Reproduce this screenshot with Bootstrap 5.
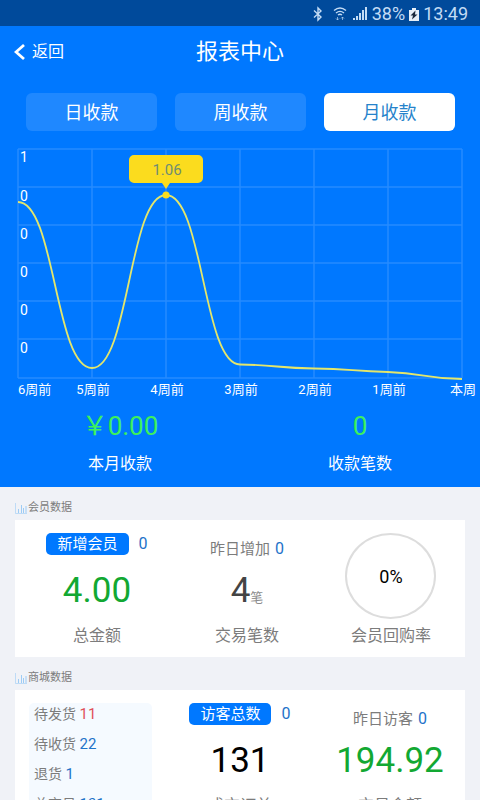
<!DOCTYPE html>
<html lang="zh-CN">
<head>
<meta charset="utf-8">
<meta name="viewport" content="width=device-width, initial-scale=1">
<title>报表中心</title>
<link href="https://cdn.jsdelivr.net/npm/bootstrap@5.3.0/dist/css/bootstrap.min.css" rel="stylesheet">
<style>
  body { font-family: Roboto, "Noto Sans CJK SC", sans-serif; background: #f0f2f7; color: #7c7c7c; }
  .screen { overflow-y: auto; scrollbar-width: none; }
  .screen::-webkit-scrollbar { display: none; }
  .status-bar { background: #004a9b; color: #c3dcf5; height: 26px; font-size: 18px; line-height: 26px; padding: 2px 12px 0 0; gap: 4px; }
  .hero { background: #0078ff; color: #fff; padding-bottom: 11px; }
  .title-bar { height: 50px; }
  .title-bar h1 { font-size: 22px; line-height: 52px; }
  .back-link { left: 14px; font-size: 16px; line-height: 52px; gap: 6px; }
  .tab-row { padding: 17px 25px 0 26px; gap: 18px; }
  .tab-btn { background: #1f88ff; color: #fff; font-size: 18px; line-height: 24px; padding: 8px 0 6px; border: 0; border-radius: 6px; }
  .tab-btn.active { background: #fff; color: #2683cb; }
  .tab-btn:hover { background: #3894ff; color: #fff; }
  .chart text { fill: #fff; font-size: 13px; }
  .chart .scale text { font-size: 14px; }
  .chart .tip-label { fill: #6f8c73; font-size: 15px; }
  .sum-num { color: #3df05c; font-size: 26px; line-height: 32px; }
  .sum-name { font-size: 16px; line-height: 24px; margin-top: 10px; }
  .panel-title { font-size: 11px; line-height: 16px; margin: 0 15px; padding-top: 5px; gap: 1px; }
  .panel { background: #fff; margin: 4px 15px 0; }
  .member-panel { height: 137px; padding: 13px 0 0 6px; }
  .shop-panel { padding: 13px 0 12px; }
  .tag-line { line-height: 22px; height: 22px; gap: 10px; }
  .tag-pill { background: #0078ff; color: #fff; font-size: 15px; line-height: 22px; padding: 0 11px; border-radius: 5px; }
  .note-line { font-size: 15px; line-height: 22px; height: 22px; margin-top: 5px; gap: 5px; }
  .blue { color: #1f73c9; }
  .tag-line .blue, .note-line .blue { font-size: 16px; }
  .red { color: #e0505a; }
  .big-num { font-size: 35px; line-height: 44px; height: 44px; margin-top: 14px; }
  .note-line + .big-num { margin-top: 9px; }
  .green { color: #12a832; }
  .dark { color: #444; }
  .unit { font-size: 13px; color: #8c8c8c; }
  .metric-name { font-size: 16px; line-height: 24px; margin-top: 11px; }
  .ring { width: 91px; height: 86px; border: 2px solid #ddd; border-radius: 50%; color: #000; font-size: 18px; }
  .ring + .metric-name { margin-top: 5px; }
  .order-box { background: #f5faff; border-radius: 5px; margin-left: 14px; margin-right: 13px; padding-left: 5px; font-size: 14px; line-height: 22px; gap: 8px; }
  .order-box .count { font-size: 15px; }
</style>
<script src="https://cdn.jsdelivr.net/npm/bootstrap@5.3.0/dist/js/bootstrap.bundle.min.js"></script>
</head>
<body>
<div class="screen vh-100">
  <div class="status-bar d-flex align-items-center justify-content-end">
    <svg width="12" height="16" viewBox="0 0 12 16" fill="none" stroke="currentColor" stroke-width="1.4" aria-hidden="true"><path d="M2 4.500 9 11 6 14V2l3 3-7 6.500"/></svg>
    <svg class="ms-1" width="16" height="16" viewBox="0 0 16 16" fill="none" stroke="currentColor" stroke-width="1.4" aria-hidden="true"><path d="M2 4.500Q8-.5 14 4.500M4 7q4-3.200 8 0M6 9q2-1.500 4 0"/><path d="M5.500 11v3M4 12.500 5.500 14 7 12.500M10.500 14v-3M9 12.500l1.500-1.500 1.500 1.500" stroke-width="1" opacity=".65"/></svg>
    <svg width="16" height="16" viewBox="0 0 16 16" fill="currentColor" aria-hidden="true"><path d="M1 12h2v2H1zM4 10h2v4H4zM7 7h2v7H7zM10 4h2v10h-2zM13 1h2v13h-2z"/></svg>
    <span>38%</span>
    <svg width="10" height="15" viewBox="0 0 10 15" aria-hidden="true"><path fill="#e6eef7" d="M3 1h4v2h3v11H0V3h3z"/><path fill="#17263b" d="M6.500 3.500 1.500 8.500H4l-1 4 5.500-5H6z"/></svg>
    <span>13:49</span>
  </div>

  <header class="hero">
    <nav class="title-bar position-relative text-center">
      <a href="#" class="back-link position-absolute top-0 d-flex align-items-center text-white text-decoration-none">
        <svg width="12" height="18" viewBox="0 0 12 18" fill="none" stroke="currentColor" stroke-width="2.8" aria-hidden="true"><path d="M10 2 2 9l8 7"/></svg>返回
      </a>
      <h1 class="m-0 fw-normal">报表中心</h1>
    </nav>

    <div class="tab-row d-flex">
      <button type="button" class="btn tab-btn flex-fill">日收款</button>
      <button type="button" class="btn tab-btn flex-fill">周收款</button>
      <button type="button" class="btn tab-btn flex-fill active">月收款</button>
    </div>

    <svg class="chart w-100 d-block" viewBox="0 0 480 271" role="img" aria-label="月收款走势">
      <path fill="none" stroke="#fff" stroke-opacity=".15" stroke-width="1.500" d="M18 18H462M18 56H462M18 94H462M18 132H462M18 170H462M18 208H462M18 247H462M18 18V247M92 18V247M166 18V247M240 18V247M314 18V247M388 18V247M462 18V247"/>
      <path fill="none" stroke="#e3e66c" stroke-width="1.800" d="M18 71C55 71 55 237 92 237S129 64 166 64S203 233 240 233.500S277 237 314 237.500S351 240 388 241S425 248 462 248"/>
      <path fill="#fbdc1e" d="M134 24h64a5 5 0 0 1 5 5v18a5 5 0 0 1-5 5h-28l-4 6-4-6h-28a5 5 0 0 1-5-5V29a5 5 0 0 1 5-5z"/>
      <circle cx="166" cy="64" r="3.500" fill="#fbdc1e"/>
      <text class="tip-label" x="167" y="44" text-anchor="middle">1.06</text>
      <g class="scale"><text x="20" y="31">1</text><text x="20" y="70">0</text><text x="20" y="108">0</text><text x="20" y="146">0</text><text x="20" y="184">0</text><text x="20" y="222">0</text></g>
      <g><text x="18" y="263">6周前</text><text x="93" y="263" text-anchor="middle">5周前</text><text x="167" y="263" text-anchor="middle">4周前</text><text x="241" y="263" text-anchor="middle">3周前</text><text x="315" y="263" text-anchor="middle">2周前</text><text x="389" y="263" text-anchor="middle">1周前</text><text x="463" y="263" text-anchor="middle">本周</text></g>
    </svg>

    <div class="row g-0 text-center pt-2">
      <div class="col-6">
        <div class="sum-num">￥0.00</div>
        <div class="sum-name">本月收款</div>
      </div>
      <div class="col-6">
        <div class="sum-num">0</div>
        <div class="sum-name">收款笔数</div>
      </div>
    </div>
  </header>

  <section class="pt-2">
    <h2 class="panel-title d-flex align-items-center fw-normal">
      <svg width="12" height="11" viewBox="0 0 12 11" fill="none" stroke="#9dccf5" aria-hidden="true"><path stroke-opacity=".6" d="M.5 0v10.500H12"/><path d="M3.500 10V6M6.500 10V2M8.500 10V5M11 10V3"/></svg>会员数据
    </h2>
    <div class="panel member-panel">
      <div class="row g-0 text-center">
        <div class="col-4">
          <div class="tag-line d-flex justify-content-center ps-1"><span class="tag-pill">新增会员</span><span class="blue">0</span></div>
          <div class="big-num green ps-1">4.00</div>
          <div class="metric-name ps-1">总金额</div>
        </div>
        <div class="col-4">
          <div class="note-line d-flex justify-content-center ps-2"><span>昨日增加</span><span class="blue">0</span></div>
          <div class="big-num dark ps-2">4<span class="unit">笔</span></div>
          <div class="metric-name ps-2">交易笔数</div>
        </div>
        <div class="col-4">
          <div class="ring d-flex align-items-center justify-content-center mx-auto">0%</div>
          <div class="metric-name">会员回购率</div>
        </div>
      </div>
    </div>
  </section>

  <section class="pt-2">
    <h2 class="panel-title d-flex align-items-center fw-normal">
      <svg width="12" height="11" viewBox="0 0 12 11" fill="none" stroke="#9dccf5" aria-hidden="true"><path stroke-opacity=".6" d="M.5 0v10.500H12"/><path d="M3.500 10V6M6.500 10V2M8.500 10V5M11 10V3"/></svg>商城数据
    </h2>
    <div class="panel shop-panel">
      <div class="row g-0 text-center">
        <div class="col-4">
          <div class="order-box text-start d-flex flex-column">
            <div>待发货 <span class="count red">11</span></div>
            <div>待收货 <span class="count blue">22</span></div>
            <div>退货 <span class="count blue">1</span></div>
            <div>总交易 <span class="count blue">131</span></div>
          </div>
        </div>
        <div class="col-4">
          <div class="tag-line d-flex justify-content-center"><span class="tag-pill">访客总数</span><span class="blue">0</span></div>
          <div class="big-num text-black">131</div>
          <div class="metric-name">成交订单</div>
        </div>
        <div class="col-4">
          <div class="note-line d-flex justify-content-center"><span>昨日访客</span><span class="blue">0</span></div>
          <div class="big-num green">194.92</div>
          <div class="metric-name">交易金额</div>
        </div>
      </div>
    </div>
  </section>
</div>
</body>
</html>
